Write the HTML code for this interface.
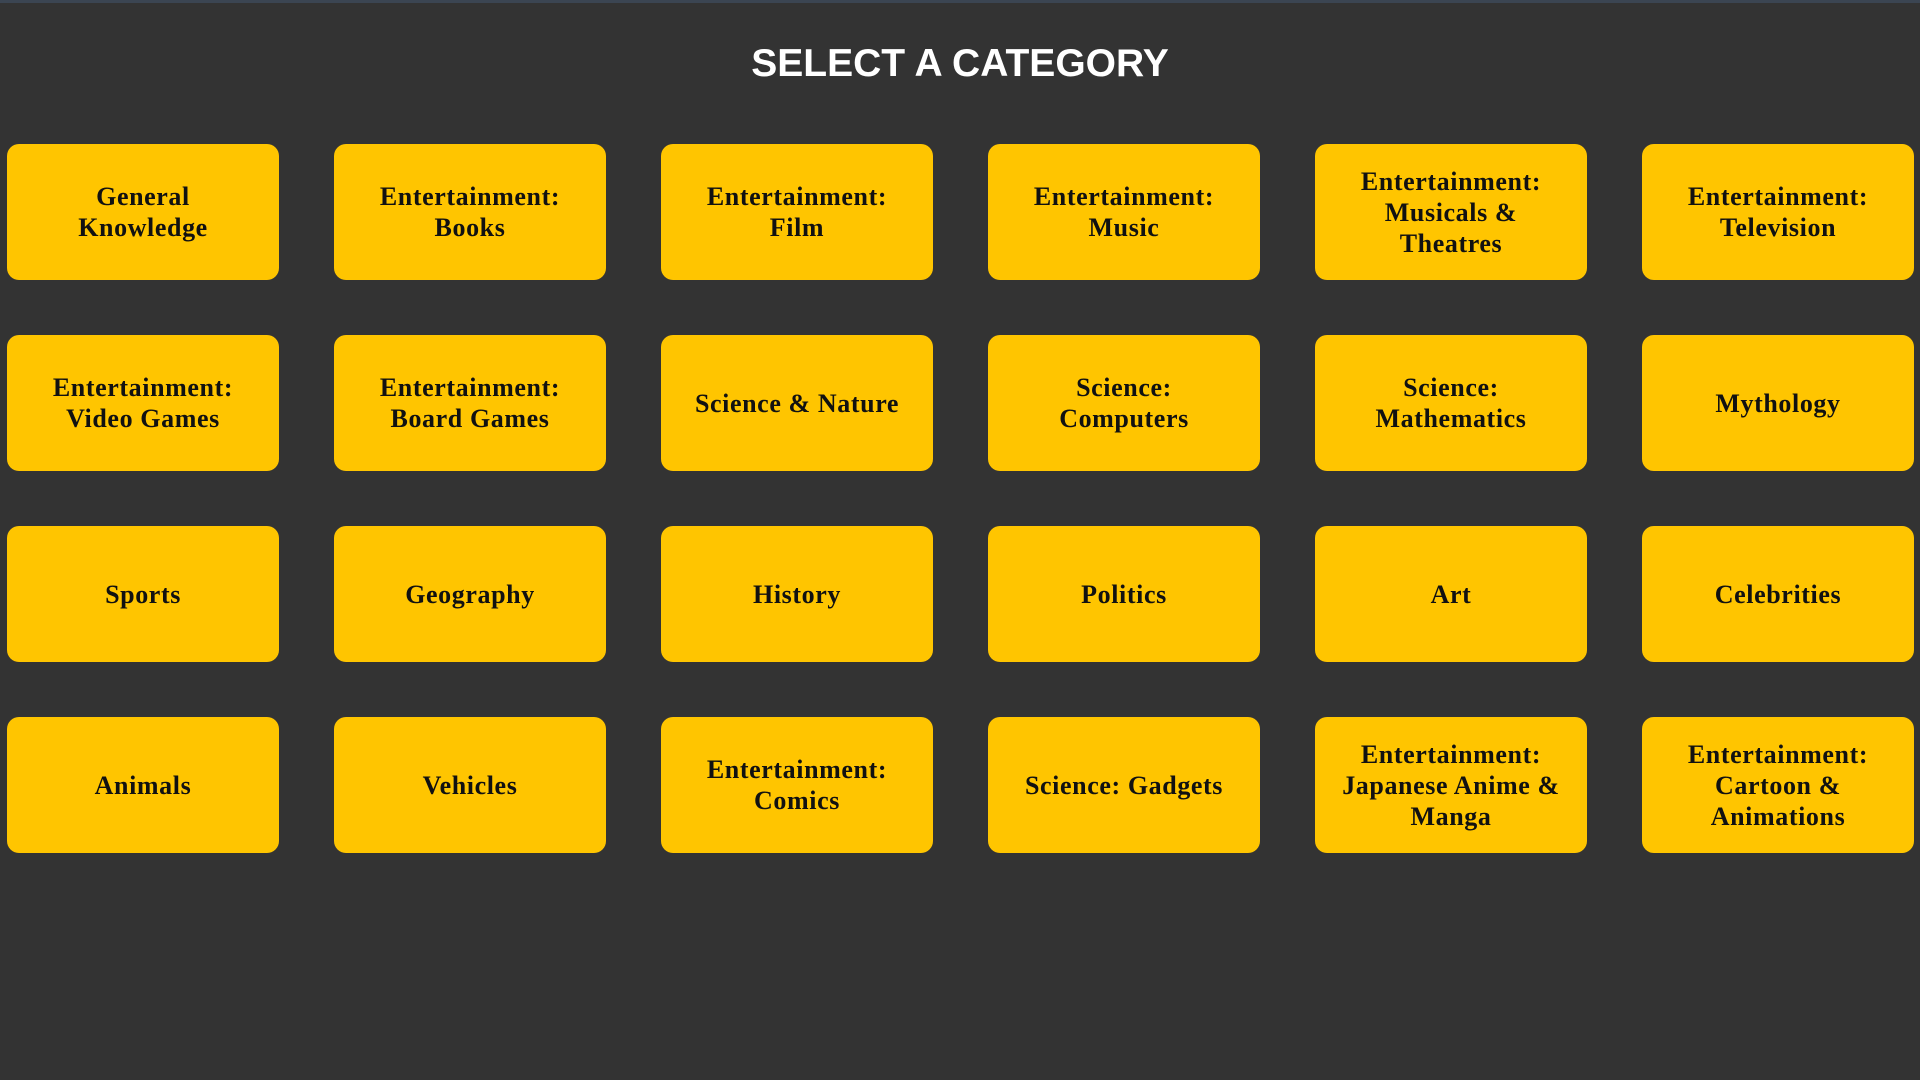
<!DOCTYPE html>
<html><head><style>
html,body{margin:0;padding:0;}
body{width:1920px;height:1080px;background:#333333;position:relative;overflow:hidden;border-top:3px solid #3b4552;box-sizing:border-box;}
h1{position:absolute;top:36px;left:0;width:1920px;margin:0;text-align:center;color:#fff;font-family:"Liberation Sans",sans-serif;font-weight:bold;font-size:39px;line-height:50px;}
.c{position:absolute;width:272px;height:136px;background:#ffc500;border-radius:12px;display:flex;align-items:center;justify-content:center;text-align:center;font-family:"Liberation Serif",serif;font-weight:bold;font-size:26px;line-height:31px;letter-spacing:0.6px;color:#111;padding:0 12px;box-sizing:border-box;}
</style></head><body>
<h1>SELECT A CATEGORY</h1>
<div class="c" style="left:7px;top:141px">General<br>Knowledge</div>
<div class="c" style="left:334px;top:141px">Entertainment:<br>Books</div>
<div class="c" style="left:661px;top:141px">Entertainment:<br>Film</div>
<div class="c" style="left:988px;top:141px">Entertainment:<br>Music</div>
<div class="c" style="left:1315px;top:141px">Entertainment:<br>Musicals &amp;<br>Theatres</div>
<div class="c" style="left:1642px;top:141px">Entertainment:<br>Television</div>
<div class="c" style="left:7px;top:332px">Entertainment:<br>Video Games</div>
<div class="c" style="left:334px;top:332px">Entertainment:<br>Board Games</div>
<div class="c" style="left:661px;top:332px">Science &amp; Nature</div>
<div class="c" style="left:988px;top:332px">Science:<br>Computers</div>
<div class="c" style="left:1315px;top:332px">Science:<br>Mathematics</div>
<div class="c" style="left:1642px;top:332px">Mythology</div>
<div class="c" style="left:7px;top:523px">Sports</div>
<div class="c" style="left:334px;top:523px">Geography</div>
<div class="c" style="left:661px;top:523px">History</div>
<div class="c" style="left:988px;top:523px">Politics</div>
<div class="c" style="left:1315px;top:523px">Art</div>
<div class="c" style="left:1642px;top:523px">Celebrities</div>
<div class="c" style="left:7px;top:714px">Animals</div>
<div class="c" style="left:334px;top:714px">Vehicles</div>
<div class="c" style="left:661px;top:714px">Entertainment:<br>Comics</div>
<div class="c" style="left:988px;top:714px">Science: Gadgets</div>
<div class="c" style="left:1315px;top:714px">Entertainment:<br>Japanese Anime &amp;<br>Manga</div>
<div class="c" style="left:1642px;top:714px">Entertainment:<br>Cartoon &amp;<br>Animations</div>
</body></html>
